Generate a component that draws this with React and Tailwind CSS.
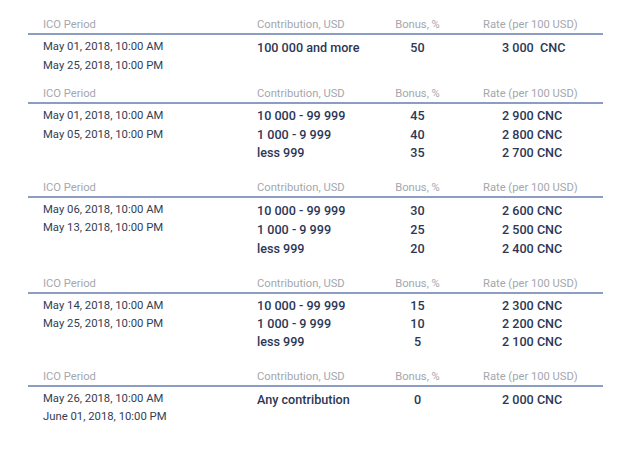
import React from "react";

const tables = [
  {
    dates: ["May 01, 2018, 10:00 AM", "May 25, 2018, 10:00 PM"],
    rows: [["100 000 and more", "50", "3 000  CNC"]],
    gap: "mb-[9px]",
    lead: "leading-[19px]",
  },
  {
    dates: ["May 01, 2018, 10:00 AM", "May 05, 2018, 10:00 PM"],
    rows: [
      ["10 000 - 99 999", "45", "2 900 CNC"],
      ["1 000 - 9 999", "40", "2 800 CNC"],
      ["less 999", "35", "2 700 CNC"],
    ],
    gap: "mb-[15px]",
    lead: "leading-[18.5px]",
  },
  {
    dates: ["May 06, 2018, 10:00 AM", "May 13, 2018, 10:00 PM"],
    rows: [
      ["10 000 - 99 999", "30", "2 600 CNC"],
      ["1 000 - 9 999", "25", "2 500 CNC"],
      ["less 999", "20", "2 400 CNC"],
    ],
    gap: "mb-[16px]",
    lead: "leading-[19px]",
  },
  {
    dates: ["May 14, 2018, 10:00 AM", "May 25, 2018, 10:00 PM"],
    rows: [
      ["10 000 - 99 999", "15", "2 300 CNC"],
      ["1 000 - 9 999", "10", "2 200 CNC"],
      ["less 999", "5", "2 100 CNC"],
    ],
    gap: "mb-[16px]",
    lead: "leading-[18px]",
  },
  {
    dates: ["May 26, 2018, 10:00 AM", "June 01, 2018, 10:00 PM"],
    rows: [["Any contribution", "0", "2 000 CNC"]],
    gap: "mb-0",
    lead: "leading-[19px]",
  },
];

export default function App() {
  return (
    <div
      className="min-h-[469px] w-[631px] bg-white pt-[15px]"
      style={{ fontFamily: "Roboto, 'Liberation Sans', sans-serif" }}
    >
      {tables.map((t, i) => (
        <div key={i} className={`ml-[28px] w-[575px] ${t.gap}`}>
          {/* Header */}
          <div className="flex h-[18px] text-[11.2px] leading-[20px] text-[#a3a7ae] border-b-2 border-[#8c9dc4] box-content">
            <div className="w-[229px] pl-[15px]">ICO Period</div>
            <div className="w-[138px]">Contribution, USD</div>
            <div className="w-[45px] text-center">Bonus, %</div>
            <div className="pl-[43px]">Rate (per 100 USD)</div>
          </div>

          {/* Body */}
          <div className="flex pt-[3px]">
            <div className="w-[229px] pl-[15px] text-[11.3px] leading-[18.5px] text-[#333d52]">
              {t.dates.map((d) => (
                <div key={d}>{d}</div>
              ))}
            </div>
            <div className={`flex-1 text-[12.6px] font-medium text-[#2c3756] ${t.lead}`}>
              {t.rows.map((r) => (
                <div key={r[0]} className="flex">
                  <div className="w-[138px]">{r[0]}</div>
                  <div className="w-[45px] text-center">{r[1]}</div>
                  <div className="pl-[62px] whitespace-pre">{r[2]}</div>
                </div>
              ))}
            </div>
          </div>
        </div>
      ))}
    </div>
  );
}
